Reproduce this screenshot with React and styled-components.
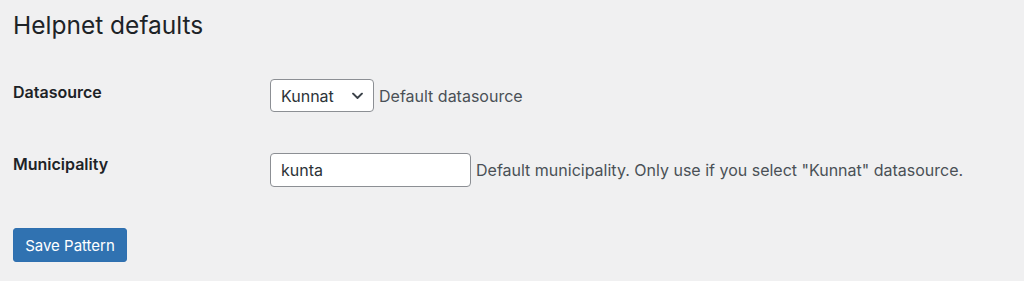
import React from 'react';
import styled, { createGlobalStyle } from 'styled-components';

const GlobalStyle = createGlobalStyle`
  html, body {
    margin: 0;
    padding: 0;
    background: #f0f0f1;
  }
  body {
    font-family: Inter, "Noto Sans", "Liberation Sans", sans-serif;
    color: #1d2327;
    -webkit-font-smoothing: antialiased;
  }
`;

const Page = styled.div`
  padding: 10px 13px 0;
  min-height: 281px;
  box-sizing: border-box;
`;

const Title = styled.h2`
  margin: 0 0 23px;
  font-size: 24.5px;
  font-weight: 400;
  line-height: 30px;
  color: #1d2327;
`;

const FormTable = styled.div`
  display: flex;
  flex-direction: column;
`;

const Row = styled.div`
  display: grid;
  grid-template-columns: 257px 1fr;
  align-items: start;
  padding: ${p => p.$first ? '16px' : '21px'} 0 20px;
`;

const Label = styled.label`
  font-size: 16px;
  font-weight: 600;
  line-height: 20px;
  padding-top: ${p => p.$pad || 3}px;
  color: #1d2327;
`;

const Field = styled.div`
  display: flex;
  align-items: center;
  gap: 5px;
`;

const SelectWrap = styled.div`
  position: relative;
  display: inline-flex;
`;

const Select = styled.select`
  appearance: none;
  -webkit-appearance: none;
  width: 104px;
  height: 33px;
  box-sizing: border-box;
  padding: 0 28px 0 10px;
  border: 1px solid #8c8f94;
  border-radius: 4px;
  background: #fff;
  font-family: inherit;
  font-size: 16px;
  color: #2c3338;
  outline: none;
`;

const Chevron = styled.svg`
  position: absolute;
  right: 11px;
  top: 50%;
  transform: translateY(-50%);
  pointer-events: none;
`;

const TextInput = styled.input`
  width: 201px;
  height: 34px;
  box-sizing: border-box;
  padding: 0 10px;
  border: 1px solid #8c8f94;
  border-radius: 4px;
  background: #fff;
  font-family: inherit;
  font-size: 16px;
  color: #2c3338;
  outline: none;
`;

const Description = styled.span`
  font-size: 16px;
  line-height: 20px;
  color: #4a5056;
`;

const SaveButton = styled.button`
  margin-top: 21px;
  width: 114px;
  height: 34px;
  padding: 0;
  border: 1px solid #2f70b0;
  border-radius: 3px;
  background: #3072b1;
  color: #fff;
  font-family: inherit;
  font-size: 15px;
  cursor: pointer;
`;

export default function App() {
  return (
    <>
      <GlobalStyle />
      <Page>
        <Title>Helpnet defaults</Title>
        <FormTable>
          <Row $first>
            <Label htmlFor="datasource" $pad={3}>Datasource</Label>
            <Field>
              <SelectWrap>
                <Select id="datasource" defaultValue="kunnat">
                  <option value="kunnat">Kunnat</option>
                </Select>
                <Chevron width="11" height="7" viewBox="0 0 11 7" fill="none">
                  <polyline points="1,1 5.5,5.5 10,1" stroke="#3c434a" strokeWidth="1.8" strokeLinecap="round" strokeLinejoin="round" />
                </Chevron>
              </SelectWrap>
              <Description>Default datasource</Description>
            </Field>
          </Row>
          <Row>
            <Label htmlFor="municipality" $pad={1}>Municipality</Label>
            <Field>
              <TextInput id="municipality" defaultValue="kunta" />
              <Description>Default municipality. Only use if you select "Kunnat" datasource.</Description>
            </Field>
          </Row>
        </FormTable>
        <SaveButton type="button">Save Pattern</SaveButton>
      </Page>
    </>
  );
}
